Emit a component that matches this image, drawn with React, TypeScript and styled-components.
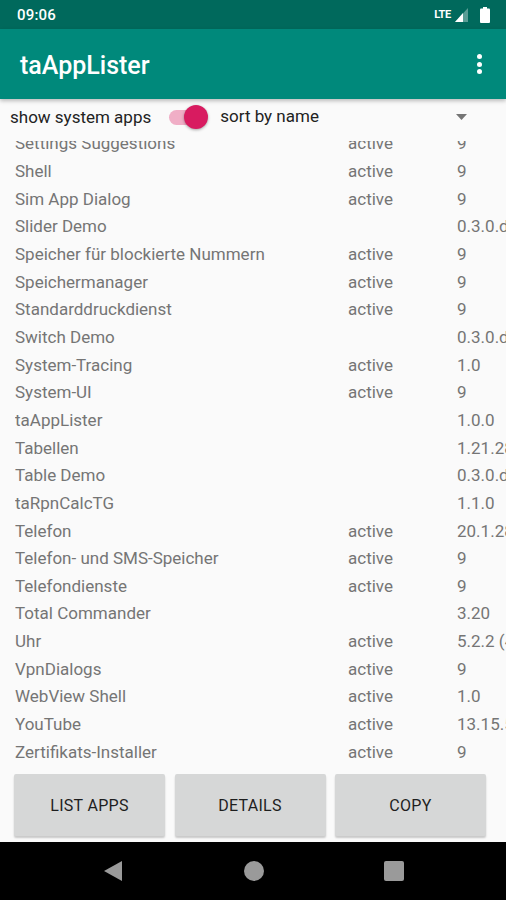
import React from 'react'
import styled, { createGlobalStyle } from 'styled-components'

type AppRow = { name: string; status: string; version: string }

const apps: AppRow[] = [
    { name: 'Settings Suggestions', status: 'active', version: '9' },
    { name: 'Shell', status: 'active', version: '9' },
    { name: 'Sim App Dialog', status: 'active', version: '9' },
    { name: 'Slider Demo', status: '', version: '0.3.0.debug' },
    { name: 'Speicher für blockierte Nummern', status: 'active', version: '9' },
    { name: 'Speichermanager', status: 'active', version: '9' },
    { name: 'Standarddruckdienst', status: 'active', version: '9' },
    { name: 'Switch Demo', status: '', version: '0.3.0.debug' },
    { name: 'System-Tracing', status: 'active', version: '1.0' },
    { name: 'System-UI', status: 'active', version: '9' },
    { name: 'taAppLister', status: '', version: '1.0.0' },
    { name: 'Tabellen', status: '', version: '1.21.283' },
    { name: 'Table Demo', status: '', version: '0.3.0.debug' },
    { name: 'taRpnCalcTG', status: '', version: '1.1.0' },
    { name: 'Telefon', status: 'active', version: '20.1.283' },
    { name: 'Telefon- und SMS-Speicher', status: 'active', version: '9' },
    { name: 'Telefondienste', status: 'active', version: '9' },
    { name: 'Total Commander', status: '', version: '3.20' },
    { name: 'Uhr', status: 'active', version: '5.2.2 (4)' },
    { name: 'VpnDialogs', status: 'active', version: '9' },
    { name: 'WebView Shell', status: 'active', version: '1.0' },
    { name: 'YouTube', status: 'active', version: '13.15.52' },
    { name: 'Zertifikats-Installer', status: 'active', version: '9' },
]

const App: React.FC = () => {
    return (
        <>
            <GlobalStyle />
            <Screen>
                <StatusBar>
                    <Clock>09:06</Clock>
                    <StatusIcons>
                        <Lte>LTE</Lte>
                        <svg width="13" height="14" viewBox="0 0 13 14">
                            <polygon points="13,0 13,14 0,14" fill="#ffffff" opacity="0.35" />
                            <polygon points="8,5 8,14 0,14" fill="#ffffff" />
                        </svg>
                        <svg width="10" height="16" viewBox="0 0 10 16">
                            <rect x="3" y="0" width="4" height="2" fill="#ffffff" />
                            <rect x="0" y="1.5" width="10" height="14.5" rx="1" fill="#ffffff" />
                        </svg>
                    </StatusIcons>
                </StatusBar>

                <Toolbar>
                    <Title>taAppLister</Title>
                    <MenuDots>
                        <Dot />
                        <Dot />
                        <Dot />
                    </MenuDots>
                </Toolbar>

                <Controls>
                    <ControlLabel>show system apps</ControlLabel>
                    <Switch>
                        <Track />
                        <Thumb />
                    </Switch>
                    <SortSelect>
                        <ControlLabel>sort by name</ControlLabel>
                        <svg width="11" height="6" viewBox="0 0 11 6">
                            <polygon points="0,0 11,0 5.5,6" fill="#757575" />
                        </svg>
                    </SortSelect>
                </Controls>

                <ListViewport>
                    <List>
                        {apps.map((app) => (
                            <Row key={app.name}>
                                <Cell>{app.name}</Cell>
                                <Cell>{app.status}</Cell>
                                <Cell>{app.version}</Cell>
                            </Row>
                        ))}
                    </List>
                </ListViewport>

                <ButtonBar>
                    <Button>List apps</Button>
                    <Button>Details</Button>
                    <Button>Copy</Button>
                </ButtonBar>

                <NavBar>
                    <svg width="20" height="22" viewBox="0 0 20 22">
                        <polygon points="19,1 19,21 1,11" fill="#9a9a9a" />
                    </svg>
                    <svg width="22" height="22" viewBox="0 0 22 22">
                        <circle cx="11" cy="11" r="10" fill="#9a9a9a" />
                    </svg>
                    <svg width="20" height="20" viewBox="0 0 20 20">
                        <rect x="0" y="0" width="20" height="20" rx="2" fill="#9a9a9a" />
                    </svg>
                </NavBar>
            </Screen>
        </>
    )
}

const GlobalStyle = createGlobalStyle`
    html, body {
        margin: 0;
        padding: 0;
        background: #fafafa;
    }
    body {
        font-family: Roboto, "Noto Sans", sans-serif;
    }
`

const Screen = styled.div`
    width: 506px;
    height: 900px;
    display: flex;
    flex-direction: column;
    background: #fafafa;
    overflow: hidden;
`

const StatusBar = styled.div`
    height: 29px;
    flex-shrink: 0;
    background: #00695c;
    display: flex;
    align-items: center;
    justify-content: space-between;
    padding: 0 16px 0 17px;
    box-sizing: border-box;
`

const Clock = styled.div`
    color: #ffffff;
    font-size: 15px;
    font-weight: 500;
    letter-spacing: 0.2px;
`

const StatusIcons = styled.div`
    display: flex;
    align-items: center;
    gap: 4px;
    svg:last-child {
        margin-left: 8px;
    }
`

const Lte = styled.span`
    color: #ffffff;
    font-size: 11px;
    font-weight: 700;
    letter-spacing: -0.3px;
`

const Toolbar = styled.div`
    height: 70px;
    flex-shrink: 0;
    background: #00897b;
    display: flex;
    align-items: center;
    justify-content: space-between;
    padding: 3px 24px 0 20px;
    box-sizing: border-box;
    box-shadow: 0 2px 4px rgba(0, 0, 0, 0.25);
    position: relative;
    z-index: 2;
`

const Title = styled.h1`
    margin: 0;
    color: #ffffff;
    font-size: 25px;
    font-weight: 500;
`

const MenuDots = styled.div`
    display: flex;
    flex-direction: column;
    gap: 2.5px;
    margin-top: -3px;
`

const Dot = styled.span`
    width: 5px;
    height: 5px;
    border-radius: 50%;
    background: #ffffff;
`

const Controls = styled.div`
    height: 42px;
    flex-shrink: 0;
    display: flex;
    align-items: center;
    padding: 0 39px 6px 10px;
    box-sizing: border-box;
`

const ControlLabel = styled.span`
    font-size: 17px;
    color: #222222;
`

const Switch = styled.div`
    position: relative;
    width: 42px;
    height: 26px;
    margin: 0 12px 0 15px;
`

const Track = styled.div`
    position: absolute;
    left: 3px;
    top: 6px;
    width: 34px;
    height: 15px;
    border-radius: 8px;
    background: #f0aec6;
`

const Thumb = styled.div`
    position: absolute;
    right: 0;
    top: 1px;
    width: 24px;
    height: 24px;
    border-radius: 50%;
    background: #d81b60;
    box-shadow: 0 1px 3px rgba(0, 0, 0, 0.35);
`

const SortSelect = styled.div`
    flex: 1;
    display: flex;
    align-items: center;
    justify-content: space-between;
    margin-top: -3px;
    svg {
        margin-top: 2px;
    }
`

const ListViewport = styled.div`
    flex: 1;
    overflow: hidden;
`

const List = styled.div`
    margin-top: -11.5px;
`

const Row = styled.div`
    height: 27.67px;
    display: grid;
    grid-template-columns: 333px 109px 1fr;
    align-items: center;
    padding-left: 15px;
    color: #757575;
    font-size: 17px;
`

const Cell = styled.div`
    white-space: nowrap;
    overflow: hidden;
`

const ButtonBar = styled.div`
    height: 72px;
    flex-shrink: 0;
    display: grid;
    grid-template-columns: repeat(3, 1fr);
    gap: 9.5px;
    padding: 4px 20px 6px 14px;
    box-sizing: border-box;
`

const Button = styled.button`
    border: none;
    border-radius: 2px;
    background: #d6d7d7;
    box-shadow: 0 2px 2px rgba(0, 0, 0, 0.2);
    color: #1e1e1e;
    font-family: Roboto, sans-serif;
    font-size: 16px;
    font-weight: 400;
    text-transform: uppercase;
    letter-spacing: 0.3px;
    padding: 0;
`

const NavBar = styled.div`
    height: 58px;
    flex-shrink: 0;
    background: #000000;
    display: flex;
    align-items: center;
    justify-content: space-between;
    padding: 0 102px 0 103px;
    box-sizing: border-box;
`

export default App
